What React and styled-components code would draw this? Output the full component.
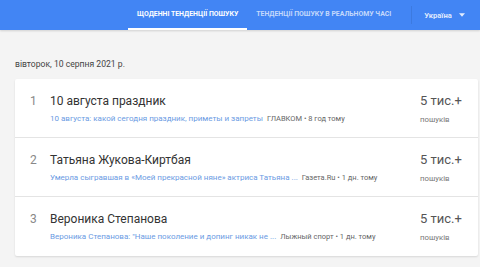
import React from 'react';
import styled, { createGlobalStyle } from 'styled-components';

const GlobalStyle = createGlobalStyle`
  html, body {
    margin: 0;
    padding: 0;
    background: #f4f4f4;
    font-family: Roboto, "Noto Sans", "Liberation Sans", sans-serif;
    overflow: hidden;
  }
`;

const trends = [
  {
    rank: 1,
    title: '10 августа праздник',
    snippet: '10 августа: какой сегодня праздник, приметы и запреты',
    source: 'ГЛАВКОМ',
    time: '8 год тому',
  },
  {
    rank: 2,
    title: 'Татьяна Жукова-Киртбая',
    snippet: 'Умерла сыгравшая в «Моей прекрасной няне» актриса Татьяна ...',
    source: 'Газета.Ru',
    time: '1 дн. тому',
  },
  {
    rank: 3,
    title: 'Вероника Степанова',
    snippet: 'Вероника Степанова: "Наше поколение и допинг никак не ...',
    source: 'Лыжный спорт',
    time: '1 дн. тому',
  },
];

const App = () => {
  return (<Page>
    <GlobalStyle />
    <Header>
      <Tab active>Щоденні тенденції пошуку</Tab>
      <Tab>Тенденції пошуку в реальному часі</Tab>
      <Divider />
      <Country>
        Україна
        <Arrow viewBox="0 0 10 6"><path d="M0 0h10L5 6z" fill="currentColor" /></Arrow>
      </Country>
    </Header>

    <Content>
      <DateLine>вівторок, 10 серпня 2021 р.</DateLine>
      <Card>
        {trends.map(t => (
          <Row key={t.rank} last={t.rank === trends.length}>
            <Rank>{t.rank}</Rank>
            <Main>
              <Title>{t.title}</Title>
              <Meta>
                <Snippet>{t.snippet}</Snippet>
                <Source>{t.source} • {t.time}</Source>
              </Meta>
            </Main>
            <Searches>
              <Count>5 тис.+</Count>
              <Label>пошуків</Label>
            </Searches>
          </Row>
        ))}
      </Card>
    </Content>
  </Page>);
}

export default App;

const Page = styled.div`
  width: 480px;
  height: 267px;
  background: #f4f4f4;
`
const Header = styled.div`
  height: 30px;
  background: #4285f4;
  display: flex;
  align-items: stretch;
  padding-left: 128px;
  box-shadow: 0 1px 2px rgba(0,0,0,0.15);
`
const Tab = styled.div`
  display: flex;
  align-items: center;
  padding: 0 9px;
  font-size: 6.9px;
  font-weight: 700;
  text-transform: uppercase;
  color: ${p => p.active ? '#fff' : 'rgba(255,255,255,0.7)'};
  border-bottom: 2px solid ${p => p.active ? '#fff' : 'transparent'};
  box-sizing: border-box;
`
const Divider = styled.div`
  width: 1px;
  margin: 6px 0 6px 11px;
  background: rgba(0,0,0,0.08);
`
const Country = styled.div`
  display: flex;
  align-items: center;
  gap: 7px;
  padding-left: 12px;
  font-size: 7.6px;
  font-weight: 700;
  color: rgba(255,255,255,0.85);
`
const Arrow = styled.svg`
  width: 6px;
  height: 4px;
`
const Content = styled.div`
  padding: 0 2px 0 15px;
`
const DateLine = styled.div`
  font-size: 8.6px;
  color: #444;
  padding: 29px 0 10px;
`
const Card = styled.div`
  background: #fff;
  box-shadow: 0 1px 2px rgba(0,0,0,0.12);
  border-radius: 2px;
`
const Row = styled.div`
  display: flex;
  height: 59px;
  box-sizing: border-box;
  border-bottom: ${p => p.last ? 'none' : '1px solid #e4e4e4'};
`
const Rank = styled.div`
  width: 35px;
  padding: 15px 0 0 15px;
  box-sizing: border-box;
  font-size: 12px;
  color: #888;
`
const Main = styled.div`
  flex: 1;
  padding-top: 14px;
  min-width: 0;
`
const Title = styled.div`
  font-size: 12px;
  color: #333;
  line-height: 16px;
`
const Meta = styled.div`
  display: flex;
  align-items: baseline;
  gap: 4px;
  margin-top: 5px;
  white-space: nowrap;
`
const Snippet = styled.span`
  font-size: 8px;
  color: #6b9be3;
`
const Source = styled.span`
  font-size: 7.5px;
  color: #666;
`
const Searches = styled.div`
  width: 58px;
  padding-top: 13px;
`
const Count = styled.div`
  font-size: 13px;
  color: #555;
  line-height: 18px;
`
const Label = styled.div`
  font-size: 7.8px;
  color: #777;
  margin-top: 5px;
`
